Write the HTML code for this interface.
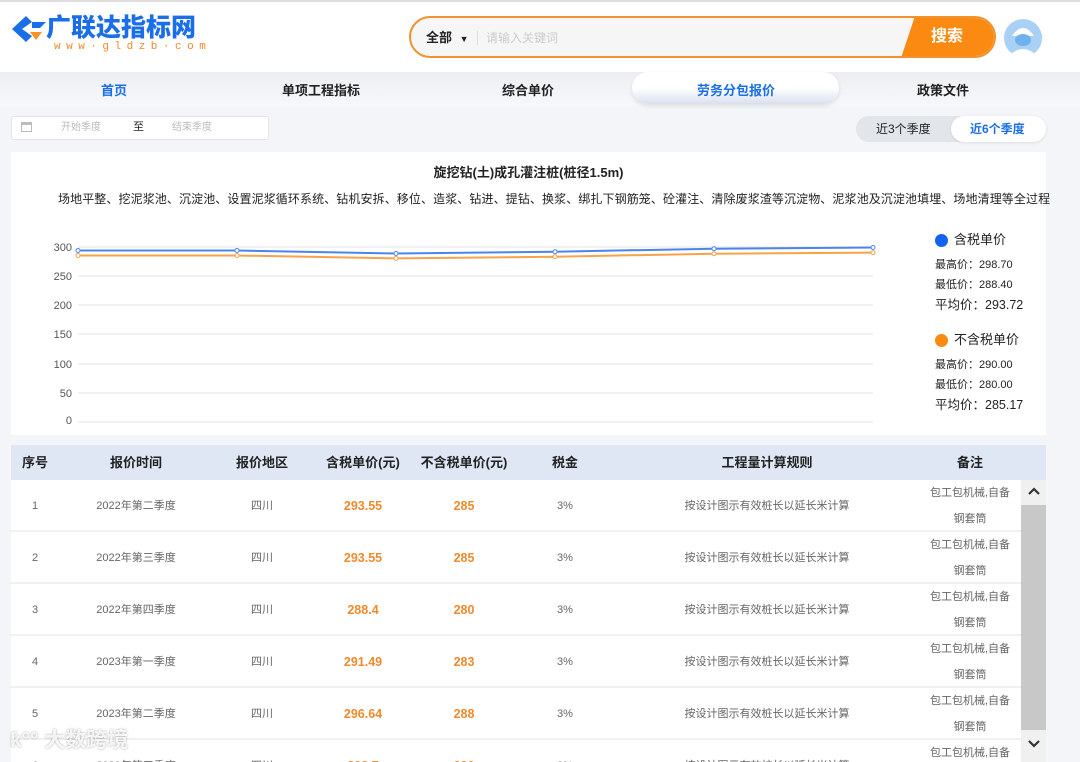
<!DOCTYPE html>
<html><head><meta charset="utf-8"><style>
*{margin:0;padding:0;box-sizing:border-box}
body{width:1080px;height:762px;overflow:hidden;background:#f3f5f9;font-family:"Liberation Sans","Noto Sans CJK SC",sans-serif;position:relative;color:#222}
.abs{position:absolute}
.hdr{left:0;top:0;width:1080px;height:72px;background:#fff;border-top:2px solid #ddd}
.nav{left:0;top:72px;width:1080px;height:34px;background:linear-gradient(#eceef2,#f7f8fa)}
.nav span{position:absolute;top:8px;font-size:13px;font-weight:bold;transform:translateX(-50%)}
.card{background:#fff}
.th{position:absolute;top:10px;font-size:13px;font-weight:bold;transform:translateX(-50%);white-space:nowrap;line-height:16px}
.td{position:absolute;font-size:11px;color:#666;transform:translateX(-50%);white-space:nowrap;line-height:14px;height:14px}
.or{color:#f08a2c;font-size:12.5px;font-weight:bold}
</style></head><body>
<div class="abs hdr">
 <svg class="abs" style="left:10px;top:12px" width="38" height="32" viewBox="0 0 38 32"><path d="M16 2 L2 15 L16 28 L22 22 L12 15 L22 8 Z" fill="#1a6fe8"/><path d="M22 8 L36 8 L30 14 L22 14Z" fill="#1a6fe8"/><path d="M20 18 L32 18 L26 26Z" fill="#f79322"/></svg>
 <div class="abs" style="left:46px;top:11px;font-size:25px;font-weight:900;color:#1a6fe8;line-height:30px">广联达指标网</div>
 <div class="abs" style="left:54px;top:39px;font-size:11px;color:#f08a2c;letter-spacing:5.5px;font-family:'Liberation Mono',monospace">www·gldzb·com</div>
 <div class="abs" style="left:409px;top:14px;width:587px;height:42px;border:2px solid #f0922e;border-radius:21px;background:#f6f6f6;overflow:hidden">
  <div class="abs" style="left:15px;top:12px;font-size:13px;font-weight:bold;line-height:16px">全部 <span style="font-size:9px;margin-left:4px">▼</span></div>
  <div class="abs" style="left:66px;top:13px;width:1px;height:14px;background:#ddd"></div>
  <div class="abs" style="left:75px;top:12px;font-size:12px;color:#ccc;line-height:16px">请输入关键词</div>
  <div class="abs" style="left:490px;top:-2px;width:100px;height:42px;background:#fb8a13;clip-path:polygon(14px 0,100% 0,100% 100%,0 100%)"></div>
  <div class="abs" style="left:520px;top:9px;font-size:16px;font-weight:bold;color:#fff;line-height:20px">搜索</div>
 </div>
 <svg class="abs" style="left:1003px;top:16px" width="40" height="40" viewBox="0 0 40 40"><circle cx="20" cy="20" r="19" fill="#a9d0f5"/><path d="M9 18 Q20 2 31 18 Z" fill="#fff"/><ellipse cx="20" cy="22" rx="8" ry="6" fill="#6fb1ef"/><path d="M8 36 Q20 26 32 36 Q20 42 8 36Z" fill="#fff"/></svg>
</div>
<div class="abs nav">
 <span style="left:114px;color:#1a6fe8">首页</span>
 <span style="left:321px">单项工程指标</span>
 <span style="left:528px">综合单价</span>
 <div class="abs" style="left:632px;top:0;width:207px;height:32px;border-radius:16px;background:linear-gradient(#fff 50%,#d9e0ee);box-shadow:0 2px 4px rgba(0,0,0,.1)"></div>
 <span style="left:736px;color:#1a6fe8">劳务分包报价</span>
 <span style="left:943px">政策文件</span>
</div>
<div class="abs card" style="left:11px;top:116px;width:258px;height:24px;border:1px solid #e2e4e8;border-radius:3px">
 <div class="abs" style="left:9px;top:5px;width:11px;height:10px;border:1px solid #bbb;border-top-width:3px"></div>
 <div class="abs" style="left:49px;top:4px;font-size:10px;color:#bbb;line-height:14px">开始季度</div>
 <div class="abs" style="left:121px;top:3px;font-size:11px;line-height:14px">至</div>
 <div class="abs" style="left:160px;top:4px;font-size:10px;color:#bbb;line-height:14px">结束季度</div>
</div>
<div class="abs" style="left:856px;top:116px;width:190px;height:26px;border-radius:13px;background:#e2e5ea">
 <div class="abs" style="left:20px;top:5px;font-size:12px;line-height:16px">近3个季度</div>
 <div class="abs" style="left:95px;top:0;width:95px;height:26px;border-radius:13px;background:#fff;box-shadow:0 1px 3px rgba(0,0,0,.1)"></div>
 <div class="abs" style="left:114px;top:5px;font-size:12px;color:#1a6fe8;font-weight:bold;line-height:16px">近6个季度</div>
</div>
<div class="abs card" style="left:11px;top:152px;width:1035px;height:283px">
 <div class="abs" style="left:0;width:1035px;top:13px;text-align:center;font-size:13px;font-weight:bold;line-height:16px">旋挖钻(土)成孔灌注桩(桩径1.5m)</div>
 <div class="abs" style="left:47px;top:39px;font-size:12px;white-space:nowrap;line-height:16px;letter-spacing:0.1px">场地平整、挖泥浆池、沉淀池、设置泥浆循环系统、钻机安拆、移位、造浆、钻进、提钻、换浆、绑扎下钢筋笼、砼灌注、清除废浆渣等沉淀物、泥浆池及沉淀池填埋、场地清理等全过程</div>
 <svg class="abs" style="left:0;top:0" width="900" height="283" viewBox="11 152 900 283">
  <g stroke="#e3e3e3" stroke-width="1">
   <line x1="78" y1="247" x2="873" y2="247"/><line x1="78" y1="276" x2="873" y2="276"/><line x1="78" y1="305" x2="873" y2="305"/><line x1="78" y1="334" x2="873" y2="334"/><line x1="78" y1="364" x2="873" y2="364"/><line x1="78" y1="393" x2="873" y2="393"/><line x1="78" y1="422" x2="873" y2="422"/>
  </g>
  <g font-size="11" fill="#555" text-anchor="end" font-family="Liberation Sans">
   <text x="72" y="251">300</text><text x="72" y="280">250</text><text x="72" y="309">200</text><text x="72" y="338">150</text><text x="72" y="368">100</text><text x="72" y="397">50</text><text x="72" y="424">0</text>
  </g>
  <polyline fill="none" stroke="#4b84ee" stroke-width="2" points="78,250.5 237,250.5 396,253.5 555,251.7 714,248.7 873,247.5"/>
  <polyline fill="none" stroke="#f8a24a" stroke-width="2" points="78,255.5 237,255.5 396,258.4 555,256.7 714,253.7 873,252.6"/>
  <g fill="#fff" stroke="#4b84ee" stroke-width="1"><circle cx="78" cy="250.5" r="2"/><circle cx="237" cy="250.5" r="2"/><circle cx="396" cy="253.5" r="2"/><circle cx="555" cy="251.7" r="2"/><circle cx="714" cy="248.7" r="2"/><circle cx="873" cy="247.5" r="2"/></g>
  <g fill="#fff" stroke="#f8a24a" stroke-width="1"><circle cx="78" cy="255.5" r="2"/><circle cx="237" cy="255.5" r="2"/><circle cx="396" cy="258.4" r="2"/><circle cx="555" cy="256.7" r="2"/><circle cx="714" cy="253.7" r="2"/><circle cx="873" cy="252.6" r="2"/></g>
 </svg>
 <div class="abs" style="left:924px;top:82px;width:13px;height:13px;border-radius:50%;background:#1462f0"></div>
 <div class="abs" style="left:943px;top:80px;font-size:13px;line-height:16px">含税单价</div>
 <div class="abs" style="left:924px;top:106px;font-size:11px;line-height:14px">最高价：298.70</div>
 <div class="abs" style="left:924px;top:126px;font-size:11px;line-height:14px">最低价：288.40</div>
 <div class="abs" style="left:924px;top:145px;font-size:12.5px;line-height:16px">平均价：293.72</div>
 <div class="abs" style="left:924px;top:182px;width:13px;height:13px;border-radius:50%;background:#fb8a13"></div>
 <div class="abs" style="left:943px;top:180px;font-size:13px;line-height:16px">不含税单价</div>
 <div class="abs" style="left:924px;top:206px;font-size:11px;line-height:14px">最高价：290.00</div>
 <div class="abs" style="left:924px;top:226px;font-size:11px;line-height:14px">最低价：280.00</div>
 <div class="abs" style="left:924px;top:245px;font-size:12.5px;line-height:16px">平均价：285.17</div>
</div>
<div class="abs card" style="left:11px;top:445px;width:1035px;height:317px;overflow:hidden">
 <div class="abs" style="left:0;top:0;width:1035px;height:35px;background:#dfe7f5">
  <div class="th" style="left:24px">序号</div><div class="th" style="left:125px">报价时间</div><div class="th" style="left:251px">报价地区</div><div class="th" style="left:352px">含税单价(元)</div><div class="th" style="left:453px">不含税单价(元)</div><div class="th" style="left:554px">税金</div><div class="th" style="left:756px">工程量计算规则</div><div class="th" style="left:959px">备注</div>
 </div>
 <div class="abs" style="left:1010px;top:35px;width:25px;height:282px;background:#f0f0f0"></div>
 <div class="abs" style="left:1010px;top:60px;width:25px;height:225px;background:#c8c8c8"></div>
 <svg class="abs" style="left:1016px;top:40px" width="14" height="12" viewBox="0 0 14 12"><path d="M2 9 L7 4 L12 9" fill="none" stroke="#333" stroke-width="2.2"/></svg>
 <svg class="abs" style="left:1016px;top:293px" width="14" height="12" viewBox="0 0 14 12"><path d="M2 3 L7 8 L12 3" fill="none" stroke="#333" stroke-width="2.2"/></svg>
 <div id="rows"></div>
</div>
<div class="abs" style="left:10px;top:728px;font-size:21px;color:rgba(255,255,255,.85);font-weight:bold;text-shadow:0 0 2px rgba(0,0,0,.35);line-height:26px">ƙ°° 大数跨境</div>
<script>
var d=[["1","2022年第二季度","293.55","285"],["2","2022年第三季度","293.55","285"],["3","2022年第四季度","288.4","280"],["4","2023年第一季度","291.49","283"],["5","2023年第二季度","296.64","288"],["6","2023年第三季度","298.7","290"]];
var h="";d.forEach(function(r,i){var t=35+i*52;h+='<div class="abs" style="left:0;top:'+t+'px;width:1010px;height:52px;border-bottom:2px solid #eef0f3">'+
'<div class="td" style="left:24px;top:19px">'+r[0]+'</div><div class="td" style="left:125px;top:19px">'+r[1]+'</div><div class="td" style="left:251px;top:19px">四川</div>'+
'<div class="td or" style="left:352px;top:19px">'+r[2]+'</div><div class="td or" style="left:453px;top:19px">'+r[3]+'</div><div class="td" style="left:554px;top:19px">3%</div>'+
'<div class="td" style="left:756px;top:19px">按设计图示有效桩长以延长米计算</div><div class="td" style="left:959px;top:6px">包工包机械,自备</div><div class="td" style="left:959px;top:32px">钢套筒</div></div>';});
document.getElementById("rows").innerHTML=h;
</script>
</body></html>
